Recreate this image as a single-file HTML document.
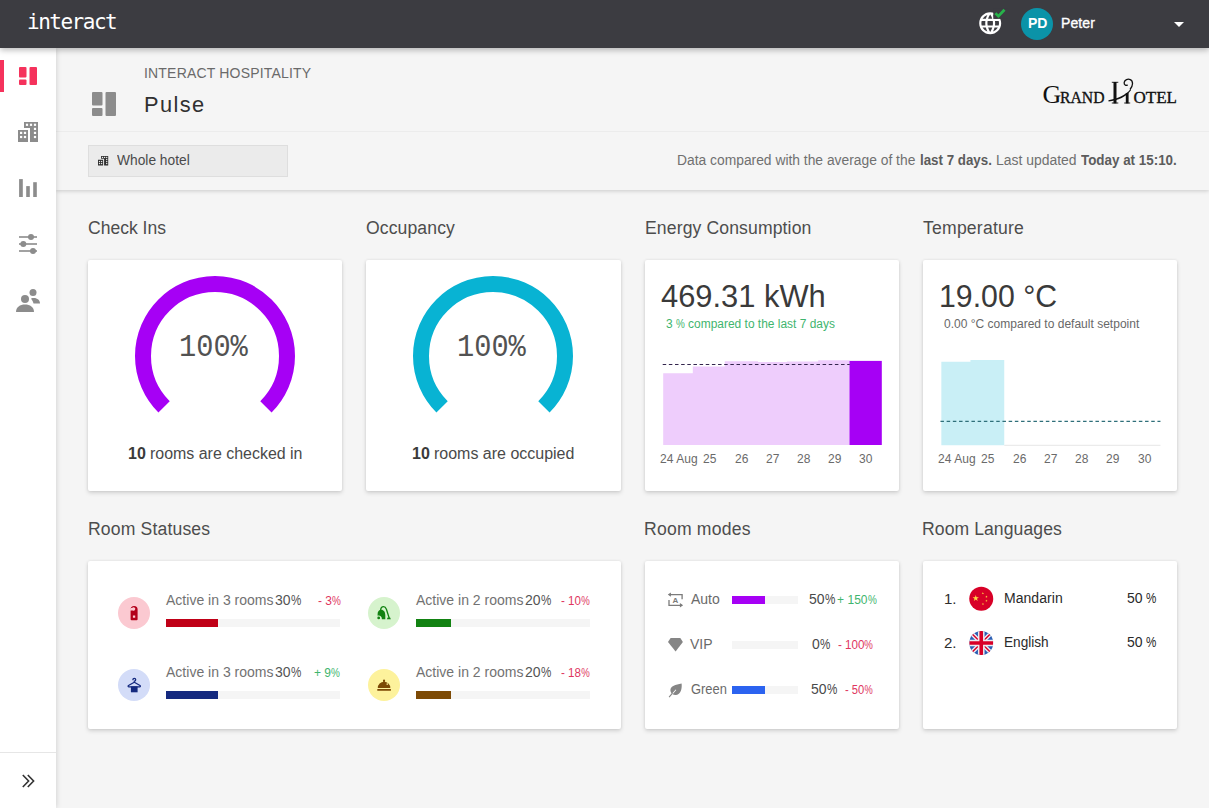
<!DOCTYPE html>
<html lang="en"><head><meta charset="utf-8"><title>Interact Hospitality - Pulse</title>
<style>
html,body{margin:0;padding:0}
body{width:1209px;height:808px;position:relative;overflow:hidden;background:#f5f5f5;font-family:"Liberation Sans",sans-serif}
.t{position:absolute;white-space:pre;line-height:1.2;z-index:20;transform-origin:0 0}
.pc{display:inline-block;font-style:normal;transform:scaleX(.83);transform-origin:0 50%;margin-right:-.15em}
.abs{position:absolute}
.topbar{position:absolute;left:0;top:0;width:1209px;height:48px;background:#3c3c41;box-shadow:0 2px 6px rgba(0,0,0,.28);z-index:10}
.side{position:absolute;left:0;top:48px;width:56px;height:760px;background:#fff;box-shadow:1px 0 5px rgba(0,0,0,.13);z-index:5}
.hdr{position:absolute;left:56px;top:48px;width:1153px;height:142px;background:#f5f5f5;box-shadow:0 1px 4px rgba(0,0,0,.18);z-index:3}
.card{position:absolute;background:#fff;border-radius:2px;box-shadow:0 2px 4px rgba(0,0,0,.15),0 0 3px rgba(0,0,0,.08)}
.track{position:absolute;height:8px;background:#f5f5f5}
.fill{position:absolute;left:0;top:0;height:8px}
.circ{position:absolute;width:32px;height:32px;border-radius:50%}
svg{position:absolute;overflow:visible}

</style></head>
<body>
<div class="topbar">
  <!-- globe -->
  <svg style="left:976.800px;top:9.600px" width="26.400" height="26.400" viewBox="0 0 24 24">
    <path fill="#fff" d="M11.990 2C6.470 2 2 6.480 2 12s4.470 10 9.990 10C17.520 22 22 17.520 22 12S17.520 2 11.990 2zm6.930 6h-2.950c-.32-1.250-.78-2.450-1.380-3.560 1.840.63 3.370 1.910 4.330 3.560zM12 4.040c.83 1.200 1.480 2.530 1.910 3.960h-3.820c.43-1.430 1.080-2.760 1.910-3.960zM4.260 14C4.100 13.360 4 12.690 4 12s.1-1.360.26-2h3.380c-.08.66-.14 1.320-.14 2 0 .68.060 1.340.14 2H4.260zm.82 2h2.950c.32 1.250.78 2.450 1.380 3.560-1.840-.63-3.370-1.900-4.330-3.560zm2.950-8H5.080c.96-1.660 2.490-2.930 4.330-3.560C8.810 5.550 8.350 6.750 8.030 8zM12 19.960c-.83-1.200-1.480-2.530-1.910-3.960h3.820c-.43 1.430-1.080 2.760-1.910 3.960zM14.340 14H9.660c-.09-.66-.16-1.320-.16-2 0-.68.070-1.350.16-2h4.680c.09.65.16 1.320.16 2 0 .68-.070 1.340-.16 2zm.25 5.560c.6-1.110 1.060-2.310 1.380-3.560h2.950c-.96 1.650-2.490 2.930-4.330 3.560zM16.360 14c.08-.66.14-1.320.14-2 0-.68-.060-1.340-.14-2h3.380c.16.640.26 1.310.26 2s-.1 1.360-.26 2h-3.380z"/>
    <path d="M14.800 -1.500h13v9.600h-13z" fill="#3c3c41"/>
    <path d="M16.700 2.900l2.800 2.700 5.500-5.800" fill="none" stroke="#27b34a" stroke-width="2.500"/>
  </svg>
  <div class="abs" style="left:1021px;top:7.500px;width:32px;height:32px;border-radius:50%;background:#0b93a8"></div>
  <svg style="left:1174px;top:22px" width="10" height="5" viewBox="0 0 10 5"><path d="M0 0h10L5 5z" fill="#fff"/></svg>
  <span class="t" id="logo" style="left:27.00px;top:10.00px;font:400 21px/1.2 'DejaVu Sans Mono', 'Liberation Mono', monospace;color:#fff;letter-spacing:-1.497px;">interact</span>
  <span class="t" id="pd" style="left:1028.00px;top:15.00px;font:700 14px/1.2 'Liberation Sans', sans-serif;color:#fff;">PD</span>
  <span class="t" id="peter" style="left:1061.00px;top:15.00px;font:400 14px/1.2 'Liberation Sans', sans-serif;color:#fff;letter-spacing:0.113px;-webkit-text-stroke:.35px #fff;">Peter</span>
</div>

<div class="side">
  <div class="abs" style="left:0;top:12px;width:4px;height:32px;background:#f5325c"></div>
  <!-- dashboard (active) -->
  <svg style="left:19px;top:19px" width="18" height="18" viewBox="0 0 18 18" fill="#f5325c">
    <rect x="0" y="0" width="7.500" height="10.600" rx="1"/><rect x="0" y="12.600" width="7.500" height="5.400" rx="1"/><rect x="10.500" y="0" width="7.500" height="18" rx="1"/>
  </svg>
  <!-- buildings -->
  <svg style="left:18px;top:74px" width="20" height="20" viewBox="18 122 20 20" fill="#8c8c8c">
    <path d="M24 122h14v20h-8v-14h-6zM18 130h10v12H18z"/>
    <g fill="#fff"><rect x="25.900" y="123.700" width="2.200" height="2.200"/><rect x="29.900" y="123.700" width="2.200" height="2.200"/><rect x="33.900" y="123.700" width="2.200" height="2.200"/>
    <rect x="33.900" y="127.800" width="2.200" height="2.200"/><rect x="33.900" y="131.800" width="2.200" height="2.200"/><rect x="33.900" y="135.900" width="2.200" height="2.200"/>
    <rect x="20" y="131.800" width="2.200" height="2.200"/><rect x="23.900" y="131.800" width="2.200" height="2.200"/><rect x="20" y="135.900" width="2.200" height="2.200"/><rect x="23.900" y="135.900" width="2.200" height="2.200"/></g>
  </svg>
  <!-- bar chart -->
  <svg style="left:19px;top:131px" width="18" height="18" viewBox="0 0 18 18" fill="#8c8c8c">
    <rect x=".1" y=".1" width="3.700" height="17.900"/><rect x="7.200" y="7.100" width="3.600" height="10.900"/><rect x="14.200" y="3.200" width="3.600" height="14.800"/>
  </svg>
  <!-- sliders -->
  <svg style="left:19px;top:186px" width="18" height="20" viewBox="0 0 18 20" fill="#8c8c8c">
    <rect x="0" y="2.2" width="18" height="1.6"/><rect x="0" y="9.2" width="18" height="1.6"/><rect x="0" y="16.2" width="18" height="1.6"/>
    <circle cx="12" cy="3" r="3"/><circle cx="4.300" cy="10" r="3"/><circle cx="14" cy="17" r="3"/>
  </svg>
  <!-- people -->
  <svg style="left:16px;top:240px" width="24" height="24" viewBox="0 0 24 24" fill="#8c8c8c">
    <circle cx="9" cy="11" r="4"/><path d="M0 24c0-5 4-7.500 9-7.500s9 2.500 9 7.500z"/>
    <circle cx="17" cy="4.500" r="3.500"/><path d="M15 10.500c5-1.500 9 1 9 5h-6.500c-.5-2-1.500-3.500-2.500-5z"/>
  </svg>
  <div class="abs" style="left:0;top:704px;width:56px;height:1px;background:#e6e6e6"></div>
  <svg style="left:22px;top:726px" width="13" height="14" viewBox="0 0 13 14" fill="none" stroke="#333" stroke-width="1.6"><path d="M0.800 1l5.800 6-5.800 6M5.800 1l5.800 6-5.800 6"/></svg>
</div>

<div class="hdr">
  <div class="abs" style="left:0;top:83px;width:1153px;height:1px;background:#ececec"></div>
  <!-- page icon -->
  <svg style="left:36px;top:44px" width="24" height="24" viewBox="0 0 24 24" fill="#8c8c8c">
    <rect x="0" y="0" width="10.500" height="13.500" rx="1"/><rect x="0" y="16" width="10.500" height="8" rx="1"/><rect x="13.500" y="0" width="10.500" height="24" rx="1"/>
  </svg>
  <!-- whole hotel select -->
  <div class="abs" style="left:32px;top:97px;width:198px;height:30px;background:#ebebeb;border:1px solid #dedede"></div>
  <svg style="left:42px;top:108.300px" width="10.200" height="9.500" viewBox="18 122 20 20" preserveAspectRatio="none" fill="#2e2e2e">
    <path d="M24 122h14v20h-8v-14h-6zM18 130h10v12H18z"/>
    <g fill="#ebebeb"><rect x="25.700" y="123.700" width="2.400" height="2.600"/><rect x="29.800" y="123.700" width="2.400" height="2.600"/><rect x="33.900" y="123.700" width="2.400" height="2.600"/>
    <rect x="33.900" y="128" width="2.400" height="2.600"/><rect x="33.900" y="132.300" width="2.400" height="2.600"/><rect x="33.900" y="136.600" width="2.400" height="2.600"/>
    <rect x="19.800" y="132.300" width="2.400" height="2.600"/><rect x="23.900" y="132.300" width="2.400" height="2.600"/><rect x="19.800" y="136.600" width="2.400" height="2.600"/><rect x="23.900" y="136.600" width="2.400" height="2.600"/></g>
  </svg>
  <!-- Grand Hotel logo -->
  <svg style="left:985px;top:28px" width="140" height="32" viewBox="1041 76 140 32">
    <g font-family="'Liberation Serif',serif" fill="#111">
      <text x="1042.500" y="103.400" font-size="26">G</text>
      <text x="1060" y="103.400" font-size="17.500" textLength="44.500" lengthAdjust="spacingAndGlyphs" stroke="#111" stroke-width=".35">RAND</text>
      <text x="1133.500" y="103.400" font-size="17.500" textLength="43.500" lengthAdjust="spacingAndGlyphs" stroke="#111" stroke-width=".35">OTEL</text>
    </g>
    <g fill="none" stroke="#111">
      <path d="M1115 82v21.400" stroke-width="3"/><path d="M1111.800 82.300h6.500M1111.800 103h6.500" stroke-width="0.900"/>
      <path d="M1127.200 93v10.400" stroke-width="2.800"/><path d="M1124.200 103h6" stroke-width="0.900"/>
      <path d="M1130 89.500c3.200-3.500 3.400-8.300.3-9.800-2.500-1.200-5.600 0-6.100 2.600-.4 2.400 1.800 3.700 3.400 2.600" stroke-width="1.300"/>
    </g>
    <path fill="#111" d="M1108.400 100.200c8.500-1.200 17.300-4.900 22-10.900l.7.600c-4.200 6.600-13.500 10.800-22.500 11.500z"/>
  </svg>
  <span class="t" id="ih" style="left:88.00px;top:17.00px;font:400 14px/1.2 'Liberation Sans', sans-serif;color:#6a6a6a;letter-spacing:0.185px;">INTERACT HOSPITALITY</span>
  <span class="t" id="pulse" style="left:88.00px;top:44.00px;font:400 21.8px/1.2 'Liberation Sans', sans-serif;color:#303030;letter-spacing:1.377px;">Pulse</span>
  <span class="t" id="wh" style="left:61.00px;top:104.00px;font:400 14px/1.2 'Liberation Sans', sans-serif;color:#4a4a4a;transform:scaleX(0.9838);">Whole hotel</span>
  <span class="t" id="d1" style="left:621.00px;top:104.00px;font:400 14px/1.2 'Liberation Sans', sans-serif;color:#707070;transform:scaleX(0.9879);">Data compared with the average of the</span>
  <span class="t" id="d2" style="left:864.00px;top:104.00px;font:700 14px/1.2 'Liberation Sans', sans-serif;color:#5c5c5c;transform:scaleX(0.9516);">last 7 days.</span>
  <span class="t" id="d3" style="left:940.00px;top:104.00px;font:400 14px/1.2 'Liberation Sans', sans-serif;color:#707070;transform:scaleX(0.9954);">Last updated</span>
  <span class="t" id="d4" style="left:1025.00px;top:104.00px;font:700 14px/1.2 'Liberation Sans', sans-serif;color:#5c5c5c;transform:scaleX(0.9568);">Today at 15:10.</span>
</div>

<!-- section titles -->
  <span class="t" id="s1" style="left:88.00px;top:218.00px;font:400 17.6px/1.2 'Liberation Sans', sans-serif;color:#4d4d4d;transform:scaleX(0.9975);">Check Ins</span>
  <span class="t" id="s2" style="left:366.00px;top:218.00px;font:400 17.6px/1.2 'Liberation Sans', sans-serif;color:#4d4d4d;letter-spacing:0.102px;">Occupancy</span>
  <span class="t" id="s3" style="left:645.00px;top:218.00px;font:400 17.6px/1.2 'Liberation Sans', sans-serif;color:#4d4d4d;letter-spacing:0.120px;">Energy Consumption</span>
  <span class="t" id="s4" style="left:923.00px;top:218.00px;font:400 17.6px/1.2 'Liberation Sans', sans-serif;color:#4d4d4d;letter-spacing:0.213px;">Temperature</span>
  <span class="t" id="s5" style="left:88.00px;top:519.00px;font:400 17.6px/1.2 'Liberation Sans', sans-serif;color:#4d4d4d;letter-spacing:0.152px;">Room Statuses</span>
  <span class="t" id="s6" style="left:644.00px;top:519.00px;font:400 17.6px/1.2 'Liberation Sans', sans-serif;color:#4d4d4d;letter-spacing:0.200px;">Room modes</span>
  <span class="t" id="s7" style="left:922.00px;top:519.00px;font:400 17.6px/1.2 'Liberation Sans', sans-serif;color:#4d4d4d;letter-spacing:0.068px;">Room Languages</span>

<!-- row 1 cards -->
<div class="card" style="left:88px;top:260px;width:254.250px;height:230.500px">
  <svg style="left:0;top:0" width="254" height="230" viewBox="88 260 254 230"><path d="M164.090 406.910A72 72 0 1 1 265.910 406.910" fill="none" stroke="#a600f5" stroke-width="16"/></svg>
  <span class="t" id="g1" style="left:91.00px;top:69.00px;font:400 31px/1.2 'Liberation Mono', monospace;color:#525252;transform:scaleX(0.9248);">100%</span>
  <span class="t" id="g1a" style="left:40.00px;top:184.00px;font:700 16px/1.2 'Liberation Sans', sans-serif;color:#3a3a3a;">10</span>
  <span class="t" id="g1b" style="left:62.00px;top:184.00px;font:400 16px/1.2 'Liberation Sans', sans-serif;color:#4a4a4a;transform:scaleX(0.9967);">rooms are checked in</span>
</div>
<div class="card" style="left:366.250px;top:260px;width:254.250px;height:230.500px">
  <svg style="left:0;top:0" width="254" height="230" viewBox="88 260 254 230"><path d="M164.090 406.910A72 72 0 1 1 265.910 406.910" fill="none" stroke="#08b3d3" stroke-width="16"/></svg>
  <span class="t" id="g2" style="left:90.75px;top:69.00px;font:400 31px/1.2 'Liberation Mono', monospace;color:#525252;transform:scaleX(0.9248);">100%</span>
  <span class="t" id="g2a" style="left:45.75px;top:184.00px;font:700 16px/1.2 'Liberation Sans', sans-serif;color:#3a3a3a;">10</span>
  <span class="t" id="g2b" style="left:67.75px;top:184.00px;font:400 16px/1.2 'Liberation Sans', sans-serif;color:#4a4a4a;transform:scaleX(0.9992);">rooms are occupied</span>
</div>
<div class="card" style="left:644.500px;top:260px;width:254.250px;height:230.500px">
  <svg style="left:0;top:0" width="254" height="230" viewBox="644.500 260 254 230">
    <path d="M662.700 445V373.200H692.300V366.400H724.300V361.200H757.400V362.100H786.500V361.500H817.700V360.200H849.200V445z" fill="#eecdfc"/>
    <rect x="849" y="360.900" width="32.300" height="84.100" fill="#a600f5"/>
    <path d="M662.200 364.500h187" stroke="#33254d" stroke-width="1.100" stroke-dasharray="3.500 2.650" fill="none"/>
  </svg>
  <span class="t" id="e1" style="left:16.50px;top:18.00px;font:400 31px/1.2 'Liberation Sans', sans-serif;color:#3a3a3a;transform:scaleX(0.9961);">469.31 kWh</span>
  <span class="t" id="e2" style="left:21.50px;top:57.00px;font:400 12px/1.2 'Liberation Sans', sans-serif;color:#3fb56e;transform:scaleX(0.9954);">3 <i class="pc">%</i> compared to the last 7 days</span>
  <span class="t" id="ea0" style="left:15.50px;top:192.00px;font:400 12px/1.2 'Liberation Sans', sans-serif;color:#6a6a6a;letter-spacing:0.057px;">24 Aug</span>
  <span class="t" id="ea1" style="left:58.50px;top:192.00px;font:400 12px/1.2 'Liberation Sans', sans-serif;color:#6a6a6a;">25</span>
  <span class="t" id="ea2" style="left:90.50px;top:192.00px;font:400 12px/1.2 'Liberation Sans', sans-serif;color:#6a6a6a;">26</span>
  <span class="t" id="ea3" style="left:121.50px;top:192.00px;font:400 12px/1.2 'Liberation Sans', sans-serif;color:#6a6a6a;">27</span>
  <span class="t" id="ea4" style="left:152.50px;top:192.00px;font:400 12px/1.2 'Liberation Sans', sans-serif;color:#6a6a6a;">28</span>
  <span class="t" id="ea5" style="left:183.50px;top:192.00px;font:400 12px/1.2 'Liberation Sans', sans-serif;color:#6a6a6a;">29</span>
  <span class="t" id="ea6" style="left:214.50px;top:192.00px;font:400 12px/1.2 'Liberation Sans', sans-serif;color:#6a6a6a;">30</span>
</div>
<div class="card" style="left:922.750px;top:260px;width:254.250px;height:230.500px">
  <svg style="left:0;top:0" width="254" height="230" viewBox="922.750 260 254 230">
    <path d="M941.100 445.300V361.800H970.200V360.100H1004V445.300z" fill="#c9eff6"/>
    <path d="M1004 445.300h156.200" stroke="#e6e6e6" stroke-width="1" fill="none"/>
    <path d="M940.200 421.400h220" stroke="#2f6f7a" stroke-width="1.100" stroke-dasharray="3.500 2.700" fill="none"/>
  </svg>
  <span class="t" id="t1" style="left:16.25px;top:18.00px;font:400 31px/1.2 'Liberation Sans', sans-serif;color:#3a3a3a;transform:scaleX(0.9770);">19.00 °C</span>
  <span class="t" id="t2" style="left:21.25px;top:57.00px;font:400 12px/1.2 'Liberation Sans', sans-serif;color:#686868;letter-spacing:0.010px;">0.00 °C compared to default setpoint</span>
  <span class="t" id="ta0" style="left:15.25px;top:192.00px;font:400 12px/1.2 'Liberation Sans', sans-serif;color:#6a6a6a;letter-spacing:0.057px;">24 Aug</span>
  <span class="t" id="ta1" style="left:58.25px;top:192.00px;font:400 12px/1.2 'Liberation Sans', sans-serif;color:#6a6a6a;">25</span>
  <span class="t" id="ta2" style="left:90.25px;top:192.00px;font:400 12px/1.2 'Liberation Sans', sans-serif;color:#6a6a6a;">26</span>
  <span class="t" id="ta3" style="left:121.25px;top:192.00px;font:400 12px/1.2 'Liberation Sans', sans-serif;color:#6a6a6a;">27</span>
  <span class="t" id="ta4" style="left:152.25px;top:192.00px;font:400 12px/1.2 'Liberation Sans', sans-serif;color:#6a6a6a;">28</span>
  <span class="t" id="ta5" style="left:183.25px;top:192.00px;font:400 12px/1.2 'Liberation Sans', sans-serif;color:#6a6a6a;">29</span>
  <span class="t" id="ta6" style="left:215.25px;top:192.00px;font:400 12px/1.2 'Liberation Sans', sans-serif;color:#6a6a6a;">30</span>
</div>

<!-- row 2 cards -->
<div class="card" style="left:88px;top:561px;width:532.500px;height:168px">
  <div class="circ" style="left:30px;top:36px;background:#fbc9d1"></div>
  <div class="circ" style="left:30px;top:108px;background:#d3dcf8"></div>
  <div class="circ" style="left:280px;top:36px;background:#d6f3cd"></div>
  <div class="circ" style="left:280px;top:108px;background:#fdf29c"></div>
  <div class="track" style="left:78px;top:58px;width:174px"><div class="fill" style="width:52px;background:#c00017"></div></div>
  <div class="track" style="left:78px;top:130px;width:174px"><div class="fill" style="width:52px;background:#14297f"></div></div>
  <div class="track" style="left:328px;top:58px;width:174px"><div class="fill" style="width:35px;background:#128212"></div></div>
  <div class="track" style="left:328px;top:130px;width:174px"><div class="fill" style="width:35px;background:#7d4a05"></div></div>
  <svg style="left:0;top:0" width="532" height="168" viewBox="88 561 532 168">
    <!-- do not disturb hanger -->
    <path fill="#b3001b" fill-rule="evenodd" d="M130.600 609.600a3.500 3.500 0 0 1 7 0v9.700a1 1 0 0 1-1 1h-5a1 1 0 0 1-1-1zM130.600 610.400h2.100a1.700 1.700 0 1 0-.6-2.300l-1.500-.2zM132.900 615.400h2.300v2.300h-2.300z"/>
    <!-- clothes hanger -->
    <g fill="none" stroke="#14297f" stroke-width="1.300" stroke-linejoin="round" stroke-linecap="round">
      <path d="M132.900 679.700a1.400 1.400 0 1 1 1.400 1.400v1.100l5.700 3.300c.8.500.4 1.300-.4 1.300h-10.700c-.8 0-1.200-.8-.4-1.300l5.800-3.300"/>
    </g>
    <path fill="#14297f" d="M130.900 686.400h6.700v5.900h-6.700z"/>
    <!-- vacuum cleaner -->
    <path fill="#128212" d="M377.600 614c0-2.600 1.400-4.300 3.600-4.300 2.600 0 4.100 2.200 4.100 5.600v3.900h-3.400c0-2.200-1.300-3.600-3.300-3.600-.4 0-.7 0-1 .1zM378.700 616.500a1.400 1.400 0 1 1 0 2.800 1.400 1.400 0 0 1 0-2.800z"/>
    <path fill="none" stroke="#128212" stroke-width="1.300" stroke-linecap="round" d="M380.600 610.200c.2-2.200 1.300-3.500 2.900-3.500 1.400 0 2.300.9 2.900 2.600l2.700 8.400"/>
    <path fill="#128212" d="M386.900 619.200l.7-1.700h2.500l.8 1.700z"/>
    <!-- service bell -->
    <path fill="#7d4a05" d="M377.800 687.900a6.250 6.250 0 0 1 12.500 0zM383 680.500a1.050 1.050 0 0 1 2.100 0v1.300h-2.100zM377.300 689h13.600v1.700h-13.600z"/>
    <circle cx="387.300" cy="684" r=".85" fill="#fdf29c"/>
  </svg>
  <span class="t" id="sta0n" style="left:78.00px;top:31.00px;font:400 14px/1.2 'Liberation Sans', sans-serif;color:#727272;letter-spacing:0.010px;">Active in 3 rooms</span>
  <span class="t" id="sta0p" style="left:187.00px;top:31.00px;font:400 14px/1.2 'Liberation Sans', sans-serif;color:#555;">30<i class="pc">%</i></span>
  <span class="t" id="sta0d" style="left:230.00px;top:33.00px;font:400 12px/1.2 'Liberation Sans', sans-serif;color:#e0365f;">- 3<i class="pc">%</i></span>
  <span class="t" id="sta1n" style="left:78.00px;top:103.00px;font:400 14px/1.2 'Liberation Sans', sans-serif;color:#727272;letter-spacing:0.010px;">Active in 3 rooms</span>
  <span class="t" id="sta1p" style="left:187.00px;top:103.00px;font:400 14px/1.2 'Liberation Sans', sans-serif;color:#555;">30<i class="pc">%</i></span>
  <span class="t" id="sta1d" style="left:226.00px;top:105.00px;font:400 12px/1.2 'Liberation Sans', sans-serif;color:#3fb56e;">+ 9<i class="pc">%</i></span>
  <span class="t" id="stb0n" style="left:328.00px;top:31.00px;font:400 14px/1.2 'Liberation Sans', sans-serif;color:#727272;letter-spacing:0.007px;">Active in 2 rooms</span>
  <span class="t" id="stb0p" style="left:437.00px;top:31.00px;font:400 14px/1.2 'Liberation Sans', sans-serif;color:#555;">20<i class="pc">%</i></span>
  <span class="t" id="stb0d" style="left:473.00px;top:33.00px;font:400 12px/1.2 'Liberation Sans', sans-serif;color:#e0365f;transform:scaleX(0.9658);">- 10<i class="pc">%</i></span>
  <span class="t" id="stb1n" style="left:328.00px;top:103.00px;font:400 14px/1.2 'Liberation Sans', sans-serif;color:#727272;letter-spacing:0.007px;">Active in 2 rooms</span>
  <span class="t" id="stb1p" style="left:437.00px;top:103.00px;font:400 14px/1.2 'Liberation Sans', sans-serif;color:#555;">20<i class="pc">%</i></span>
  <span class="t" id="stb1d" style="left:473.00px;top:105.00px;font:400 12px/1.2 'Liberation Sans', sans-serif;color:#e0365f;transform:scaleX(0.9658);">- 18<i class="pc">%</i></span>
</div>
<div class="card" style="left:644.500px;top:561px;width:254.250px;height:168px">
  <div class="track" style="left:87.700px;top:35.200px;width:66px"><div class="fill" style="width:33px;background:#a600f5"></div></div>
  <div class="track" style="left:87.700px;top:80.200px;width:66px"></div>
  <div class="track" style="left:87.700px;top:125.200px;width:66px"><div class="fill" style="width:33px;background:#2b63f0"></div></div>
  <svg style="left:0;top:0" width="254" height="168" viewBox="644.500 561 254 168">
    <!-- auto mode -->
    <g fill="none" stroke="#7b7b7b" stroke-width="1.300">
      <path d="M668.400 594.600h13.200v4.600M681.600 605.300h-13.100v-5.300"/>
    </g>
    <path fill="#7b7b7b" d="M667.300 594.600l3.100-2.100v4.200zM682.600 605.300l-3.200-2.300v4.600z"/>
    <text x="675" y="602.700" text-anchor="middle" font-family="'Liberation Sans',sans-serif" font-weight="700" font-size="8" fill="#7b7b7b">A</text>
    <!-- vip diamond -->
    <path fill="#858585" d="M670.100 637.900h9.700l2.600 4-7.300 9.500-7.600-9.500z"/>
    <!-- green leaf -->
    <path fill="#858585" d="M681.100 683.400c.6 4.600-.6 10.600-5.400 11.600-1.300.3-2.600 0-3.600-.7l3.700-4.400-.6-.5-3.800 4.300c-1-1-1.500-2.300-1.500-3.600 0-4.500 5.200-5.200 11.200-6.700z"/>
    <path fill="none" stroke="#858585" stroke-width="1.100" d="M668.600 697.100l3.400-3.900"/>
  </svg>
  <span class="t" id="m1n" style="left:46.50px;top:30.00px;font:400 14px/1.2 'Liberation Sans', sans-serif;color:#6a6a6a;">Auto</span>
  <span class="t" id="m1p" style="left:164.50px;top:30.00px;font:400 14px/1.2 'Liberation Sans', sans-serif;color:#4a4a4a;">50<i class="pc">%</i></span>
  <span class="t" id="m1d" style="left:192.50px;top:32.00px;font:400 12px/1.2 'Liberation Sans', sans-serif;color:#3fb56e;letter-spacing:0.042px;">+ 150<i class="pc">%</i></span>
  <span class="t" id="m2n" style="left:45.50px;top:75.00px;font:400 14px/1.2 'Liberation Sans', sans-serif;color:#6a6a6a;">VIP</span>
  <span class="t" id="m2p" style="left:167.50px;top:75.00px;font:400 14px/1.2 'Liberation Sans', sans-serif;color:#4a4a4a;">0<i class="pc">%</i></span>
  <span class="t" id="m2d" style="left:193.50px;top:77.00px;font:400 12px/1.2 'Liberation Sans', sans-serif;color:#e0365f;transform:scaleX(0.9700);">- 100<i class="pc">%</i></span>
  <span class="t" id="m3n" style="left:46.50px;top:120.00px;font:400 14px/1.2 'Liberation Sans', sans-serif;color:#6a6a6a;transform:scaleX(0.9223);">Green</span>
  <span class="t" id="m3p" style="left:166.50px;top:120.00px;font:400 14px/1.2 'Liberation Sans', sans-serif;color:#4a4a4a;">50<i class="pc">%</i></span>
  <span class="t" id="m3d" style="left:200.50px;top:122.00px;font:400 12px/1.2 'Liberation Sans', sans-serif;color:#e0365f;transform:scaleX(0.9308);">- 50<i class="pc">%</i></span>
</div>
<div class="card" style="left:922.750px;top:561px;width:254.250px;height:168px">
  <svg style="left:0;top:0" width="254" height="168" viewBox="922.750 561 254 168">
    <defs><clipPath id="fl2"><circle cx="981" cy="643" r="12"/></clipPath></defs>
    <!-- China -->
    <circle cx="981" cy="598.700" r="12" fill="#d80027"/>
    <g fill="#ffda44">
      <path d="M975.50 595.00L976.24 597.28L978.64 597.28L976.70 598.69L977.44 600.97L975.50 599.56L973.56 600.97L974.30 598.69L972.36 597.28L974.76 597.28z"/>
      <path d="M982.60 592.05L982.88 592.91L983.79 592.91L983.05 593.45L983.33 594.31L982.60 593.78L981.87 594.31L982.15 593.45L981.41 592.91L982.32 592.91z"/><path d="M986.20 595.45L986.48 596.31L987.39 596.31L986.65 596.85L986.93 597.71L986.20 597.18L985.47 597.71L985.75 596.85L985.01 596.31L985.92 596.31z"/><path d="M986.20 599.55L986.48 600.41L987.39 600.41L986.65 600.95L986.93 601.81L986.20 601.28L985.47 601.81L985.75 600.95L985.01 600.41L985.92 600.41z"/><path d="M982.70 602.85L982.98 603.71L983.89 603.71L983.15 604.25L983.43 605.11L982.70 604.58L981.97 605.11L982.25 604.25L981.51 603.71L982.42 603.71z"/>
    </g>
    <!-- UK -->
    <g clip-path="url(#fl2)">
      <rect x="969" y="631" width="24" height="24" fill="#2b5fb4"/>
      <path d="M969 631l24 24M993 631l-24 24" stroke="#ececf2" stroke-width="4.200"/>
      <path d="M969 631l24 24M993 631l-24 24" stroke="#d80027" stroke-width="1.400"/>
      <path d="M981 631v24M969 643h24" stroke="#ececf2" stroke-width="6.600"/>
      <path d="M981 631v24M969 643h24" stroke="#d80027" stroke-width="3.600"/>
    </g>
  </svg>
  <span class="t" id="l1i" style="left:21.25px;top:29.00px;font:400 15px/1.2 'Liberation Sans', sans-serif;color:#2e2e2e;">1.</span>
  <span class="t" id="l1n" style="left:81.25px;top:29.00px;font:400 14px/1.2 'Liberation Sans', sans-serif;color:#2a2a2a;letter-spacing:0.044px;">Mandarin</span>
  <span class="t" id="l1p" style="left:204.25px;top:29.00px;font:400 14px/1.2 'Liberation Sans', sans-serif;color:#2a2a2a;">50 <i class="pc">%</i></span>
  <span class="t" id="l2i" style="left:21.25px;top:73.00px;font:400 15px/1.2 'Liberation Sans', sans-serif;color:#2e2e2e;">2.</span>
  <span class="t" id="l2n" style="left:81.25px;top:73.00px;font:400 14px/1.2 'Liberation Sans', sans-serif;color:#2a2a2a;transform:scaleX(0.9736);">English</span>
  <span class="t" id="l2p" style="left:204.25px;top:73.00px;font:400 14px/1.2 'Liberation Sans', sans-serif;color:#2a2a2a;">50 <i class="pc">%</i></span>
</div>

</body></html>
